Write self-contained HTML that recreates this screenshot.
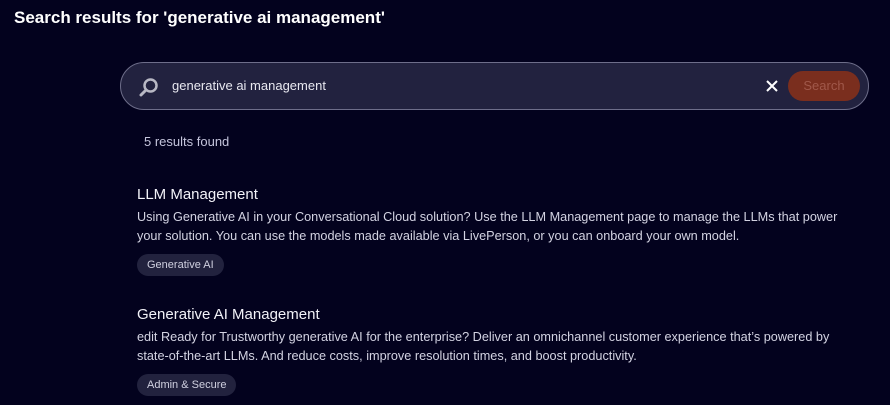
<!DOCTYPE html>
<html><head><style>
body{margin:0;width:890px;height:405px;background:#03021e;font-family:"Liberation Sans",sans-serif;color:#fff;position:relative;overflow:hidden}
.h{position:absolute;left:14px;top:8px;font-size:17px;font-weight:bold}
.bar{position:absolute;left:120px;top:62px;width:747px;height:46px;border:1px solid #6e6e8a;border-radius:24px;background:#22223f}
.q{position:absolute;left:51px;top:15px;font-size:13px;color:#e8e8f0}
.btn{position:absolute;left:667px;top:8px;width:72px;height:30px;border-radius:15px;background:#7a2e1e;color:#a0584a;font-size:13px;text-align:center;line-height:30px}
.cnt{position:absolute;left:144px;top:134px;font-size:13px;color:#c5c5dc}
.r{position:absolute;left:137px;width:728px}
.t{font-size:15px;color:#f2f2f8;margin-bottom:5px}
.d{font-size:12.7px;line-height:19px;color:#d3d3e2}
.tag{display:inline-block;margin-top:8px;background:#22223e;border-radius:12px;padding:5px 10px;font-size:11px;color:#d0d0e0}
</style></head><body>
<div class="h">Search results for 'generative ai management'</div>
<div class="bar">
<svg style="position:absolute;left:17px;top:13px" width="22" height="22" viewBox="0 0 22 22"><circle cx="12.5" cy="9.5" r="6" fill="none" stroke="#b8b8c4" stroke-width="2.5"/><line x1="8" y1="14" x2="3" y2="19" stroke="#b8b8c4" stroke-width="3" stroke-linecap="round"/></svg>
<div class="q">generative ai management</div>
<svg style="position:absolute;left:644px;top:16px" width="14" height="14" viewBox="0 0 14 14"><path d="M2 2L12 12M12 2L2 12" stroke="#fff" stroke-width="2"/></svg>
<div class="btn">Search</div>
</div>
<div class="cnt">5 results found</div>
<div class="r" style="top:186px"><div class="t">LLM Management</div><div class="d">Using Generative AI in your Conversational Cloud solution? Use the LLM Management page to manage the LLMs that power your solution. You can use the models made available via LivePerson, or you can onboard your own model.</div><div class="tag">Generative AI</div></div>
<div class="r" style="top:306px"><div class="t">Generative AI Management</div><div class="d">edit Ready for Trustworthy generative AI for the enterprise? Deliver an omnichannel customer experience that’s powered by <span style="white-space:nowrap">state-of-the-art</span> LLMs. And reduce costs, improve resolution times, and boost productivity.</div><div class="tag">Admin &amp; Secure</div></div>
</body></html>
